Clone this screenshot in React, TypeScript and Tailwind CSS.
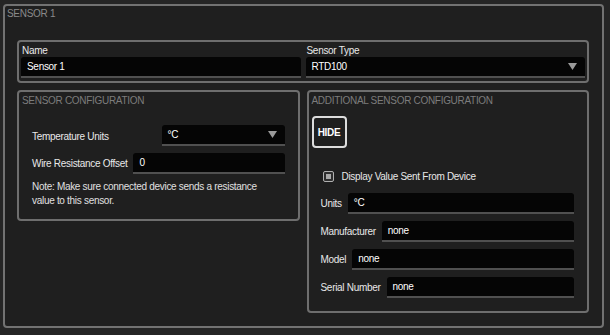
import { ReactNode } from 'react'

const Arrow = () => (
  <svg className="ml-auto mr-[8px] shrink-0" width="9" height="7" viewBox="0 0 9 7">
    <polygon points="0,0 9,0 4.5,7" fill="#9a9a9a" />
  </svg>
)

const Input = ({
  value,
  select,
  className = '',
}: {
  value: string
  select?: boolean
  className?: string
}) => (
  <div
    className={`flex h-[21px] items-center rounded-t-[3px] border-b-2 border-[#505050] bg-[#050505] pl-[6px] text-white ${className}`}
  >
    <span className="leading-[12px]">{value}</span>
    {select && <Arrow />}
  </div>
)

const Row = ({ label, value }: { label: string; value: string }) => (
  <div className="flex items-center gap-[6px]">
    <span className="whitespace-nowrap text-[#e8e8e8]">{label}</span>
    <Input value={value} className="flex-1" />
  </div>
)

const Panel = ({ title, children }: { title: string; children: ReactNode }) => (
  <div className="rounded-[4px] border-2 border-[#6e6e6e]">
    <div className="pl-[3px] pt-[3px] leading-[12px] text-[#7c7c7c] uppercase">{title}</div>
    {children}
  </div>
)

export default function App() {
  return (
    <div className="min-h-[335px] bg-[#252525] pl-[3px] pt-[4px] font-['Liberation_Sans',Arial,sans-serif] text-[10px] tracking-[-0.3px]">
      <div className="w-[601px] rounded-[4px] border-2 border-[#727272] bg-[#1f1f1f] pb-[13px]">
        <div className="mt-[2px] pl-[2px] leading-[12px] text-[#8a8a8a]">SENSOR 1</div>

        <div className="ml-[12px] mr-[13px] mt-[20px]">
          <div className="grid grid-cols-2 gap-[5px] rounded-[4px] border-2 border-[#6e6e6e] px-[2px] pb-[3px]">
            <div>
              <div className="pl-[1px] pt-[3px] leading-[12px] text-[#e8e8e8]">Name</div>
              <Input value="Sensor 1" />
            </div>
            <div>
              <div className="pl-[1px] pt-[3px] leading-[12px] text-[#e8e8e8]">Sensor Type</div>
              <Input value="RTD100" select />
            </div>
          </div>

          <div className="mt-[7px] grid grid-cols-2 items-start gap-[7px]">
            <Panel title="Sensor Configuration">
              <div className="flex flex-col px-[13px] pb-[11px] pt-[18px]">
                <div className="flex items-center">
                  <span className="pt-[2px] text-[#e8e8e8]">Temperature Units</span>
                  <Input value="°C" select className="ml-auto w-[123px]" />
                </div>
                <div className="mt-[7px]">
                  <Row label="Wire Resistance Offset" value="0" />
                </div>
                <p className="mt-[6px] pr-[20px] leading-[14px] text-[#e0e0e0]">
                  Note: Make sure connected device sends a resistance value to this sensor.
                </p>
              </div>
            </Panel>

            <Panel title="Additional Sensor Configuration">
              <div className="pl-[3px] pt-[9px]">
                <button className="flex h-[32px] w-[35px] items-center justify-center rounded-[4px] border-2 border-[#dcdcdc] font-bold text-white">
                  HIDE
                </button>
              </div>
              <div className="flex flex-col pb-[13px] pl-[12px] pr-[13px]">
                <label className="ml-[2px] mt-[21px] flex h-[14px] items-center gap-[8px] text-[#e8e8e8]">
                  <span className="flex h-[11px] w-[11px] items-center justify-center rounded-[2px] border-[1.5px] border-[#b0b0b0] bg-[#2e2e2e]">
                    <span className="h-[5px] w-[5px] bg-[#a8a8a8]" />
                  </span>
                  Display Value Sent From Device
                </label>
                <div className="mt-[10px] flex flex-col gap-[7px]">
                  <Row label="Units" value="°C" />
                  <Row label="Manufacturer" value="none" />
                  <Row label="Model" value="none" />
                  <Row label="Serial Number" value="none" />
                </div>
              </div>
            </Panel>
          </div>
        </div>
      </div>
    </div>
  )
}
